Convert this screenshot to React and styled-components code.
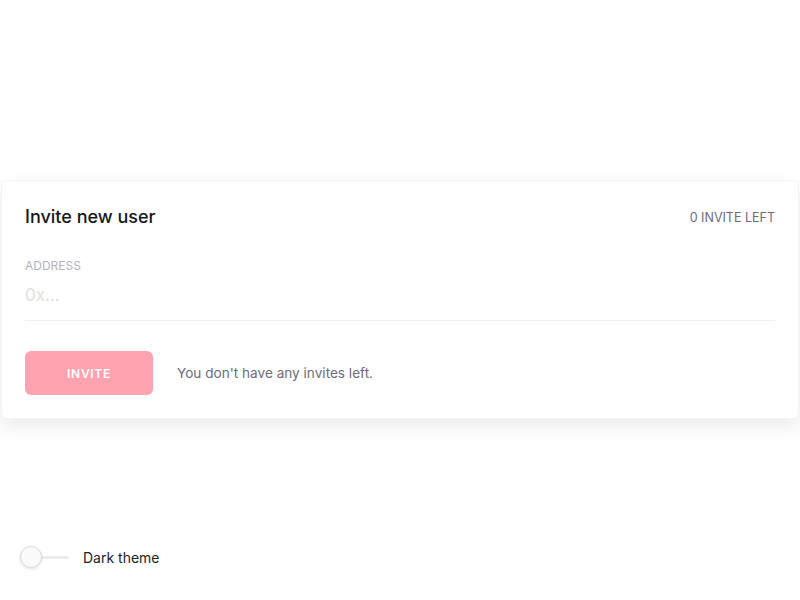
import React from "react";
import styled, { createGlobalStyle } from "styled-components";

const Global = createGlobalStyle`
  html, body { margin: 0; padding: 0; background: #ffffff; }
  body { font-family: Inter, "Noto Sans", sans-serif; -webkit-font-smoothing: antialiased; }
  * { box-sizing: border-box; }
`;

const Page = styled.div`
  width: 800px;
  height: 600px;
  display: flex;
  flex-direction: column;
  padding-top: 180px;
  overflow: hidden;
`;

const Card = styled.section`
  margin: 0 1px 0 1px;
  background: #fff;
  border: 1px solid #f3f3f5;
  border-radius: 6px;
  box-shadow: 0 8px 20px rgba(0, 0, 0, 0.08);
  padding: 24px 23px 23px 23px;
  display: flex;
  flex-direction: column;
`;

const Header = styled.div`
  display: flex;
  justify-content: space-between;
  align-items: center;
`;

const Title = styled.h2`
  margin: 0;
  font-size: 18px;
  line-height: 24px;
  font-weight: 500;
  color: #16161d;
`;

const Counter = styled.span`
  font-size: 12.5px;
  color: #6c6b78;
  text-transform: uppercase;
`;

const Label = styled.label`
  margin-top: 29px;
  font-size: 12px;
  line-height: 16px;
  color: #b3b2bd;
  text-transform: uppercase;
`;

const Input = styled.input`
  margin-top: 4px;
  border: none;
  border-bottom: 1px solid #f0f0f2;
  padding: 5px 0 13px;
  font-family: inherit;
  font-size: 17px;
  line-height: 24px;
  color: #333;
  outline: none;
  background: transparent;
  &::placeholder { color: #dededf; }
`;

const Actions = styled.div`
  margin-top: 30px;
  display: flex;
  align-items: center;
  gap: 24px;
`;

const Button = styled.button`
  width: 128px;
  height: 44px;
  border: none;
  border-radius: 6px;
  background: #ffa3b1;
  color: #fff;
  font-family: inherit;
  font-size: 12px;
  font-weight: 600;
  letter-spacing: 0.7px;
  text-transform: uppercase;
`;

const Message = styled.span`
  font-size: 13.6px;
  color: #6e6b7a;
`;

const ThemeRow = styled.div`
  margin-top: 127px;
  padding-left: 20px;
  display: flex;
  align-items: center;
  gap: 14px;
`;

const Switch = styled.div`
  position: relative;
  width: 49px;
  height: 22px;
  display: flex;
  align-items: center;
`;

const Track = styled.div`
  width: 100%;
  height: 3px;
  border-radius: 2px;
  background: #ececee;
`;

const Knob = styled.div`
  position: absolute;
  left: 0;
  top: 0;
  width: 22px;
  height: 22px;
  border-radius: 50%;
  background: #fafafa;
  border: 1px solid #dcdcdc;
  box-shadow: 0 1px 3px rgba(0, 0, 0, 0.12);
`;

const ThemeLabel = styled.span`
  font-size: 14px;
  color: #1e1e24;
`;

export default function App() {
  return (
    <>
      <Global />
      <Page>
        <Card>
          <Header>
            <Title>Invite new user</Title>
            <Counter>0 invite left</Counter>
          </Header>
          <Label>Address</Label>
          <Input placeholder="0x..." />
          <Actions>
            <Button>Invite</Button>
            <Message>You don't have any invites left.</Message>
          </Actions>
        </Card>
        <ThemeRow>
          <Switch>
            <Track />
            <Knob />
          </Switch>
          <ThemeLabel>Dark theme</ThemeLabel>
        </ThemeRow>
      </Page>
    </>
  );
}
